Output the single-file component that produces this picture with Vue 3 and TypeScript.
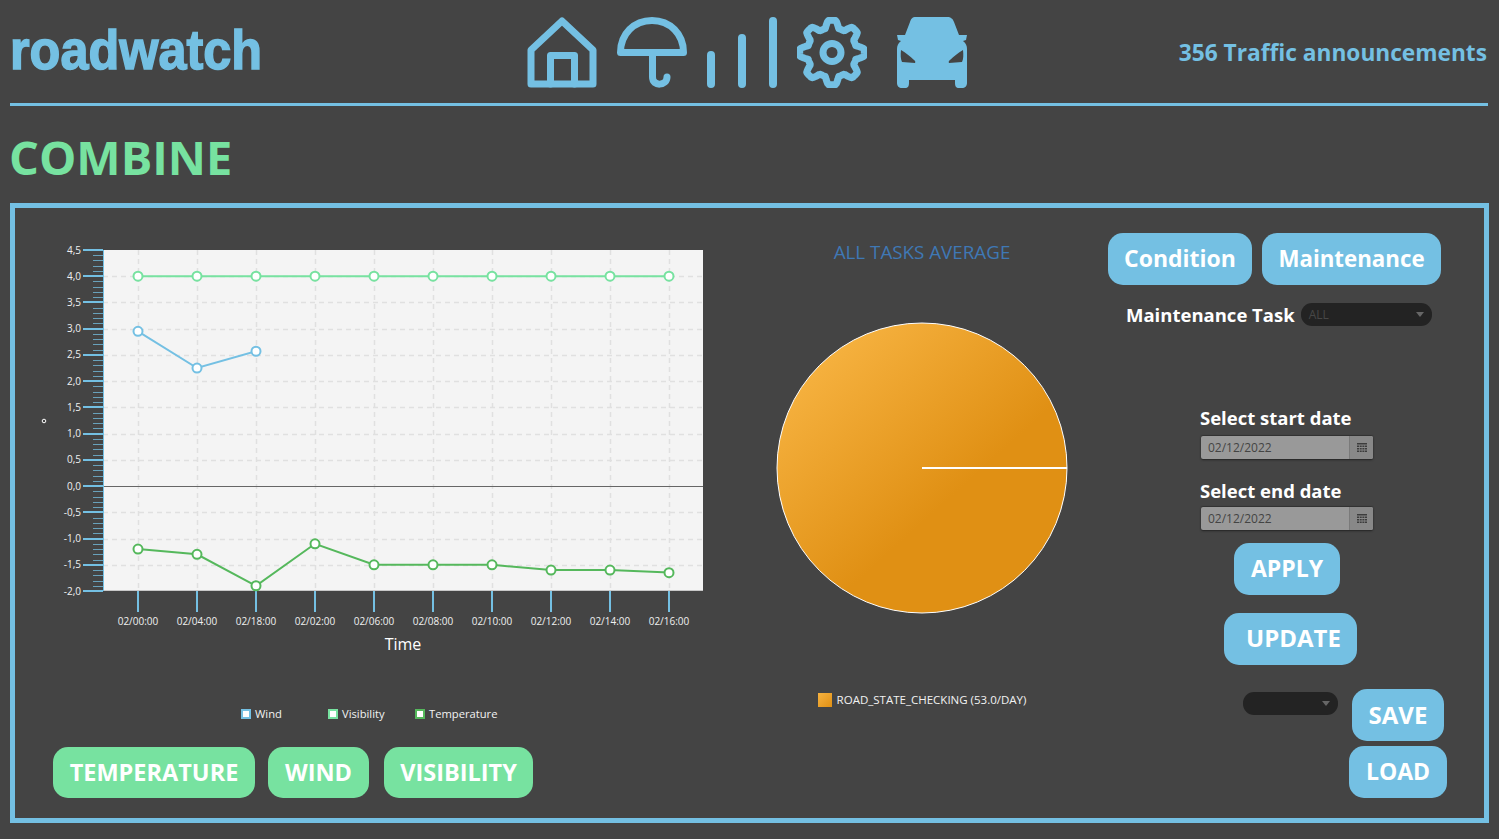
<script setup lang="ts">
const plot = { left: 88, right: 688, top: 42, bottom: 383 }
const unit = (plot.bottom - plot.top) / 6.5
const y = (v: number) => plot.bottom - (v + 2) * unit
const x = (i: number) => 123 + i * 59
// snap hairlines to the pixel grid
const crisp = (v: number) => Math.round(y(v)) + 0.5

const times = ['02/00:00', '02/04:00', '02/18:00', '02/02:00', '02/06:00', '02/08:00', '02/10:00', '02/12:00', '02/14:00', '02/16:00']
const majors = [4.5, 4, 3.5, 3, 2.5, 2, 1.5, 1, 0.5, 0, -0.5, -1, -1.5, -2]
const gridRows = majors.filter((m) => m !== 4.5 && m !== 0 && m !== -2)
const minors: number[] = []
for (let i = 0; i < 13; i++) {
  for (let j = 1; j < 5; j++) minors.push(-2 + i * 0.5 + j * 0.1)
}

const series = [
  { name: 'Visibility', color: '#77e2a0', values: [4, 4, 4, 4, 4, 4, 4, 4, 4, 4] },
  { name: 'Wind', color: '#74c0e3', values: [2.95, 2.25, 2.57] },
  { name: 'Temperature', color: '#55b85c', values: [-1.2, -1.3, -1.9, -1.1, -1.5, -1.5, -1.5, -1.6, -1.6, -1.65] }
]
const legend = [series[1], series[0], series[2]]

const line = (values: number[]) => values.map((v, i) => `${x(i)},${y(v).toFixed(1)}`).join(' ')
const label = (v: number) => v.toFixed(1).replace('.', ',')

// cog outline, 8 teeth, one pointing straight up
const gearPath = (() => {
  const pts: string[] = []
  for (let d = 0; d < 360; d += 2) {
    const a = (d * Math.PI) / 180
    const wave = Math.max(-1, Math.min(1, Math.cos(8 * a) * 1.7))
    const r = 28.5 + 3.8 * wave
    pts.push(`${(35 + r * Math.sin(a)).toFixed(2)} ${(35.5 - r * Math.cos(a)).toFixed(2)}`)
  }
  return 'M' + pts.join('L') + 'Z'
})()
</script>

<template>
  <div class="page">
    <header class="top">
      <div class="logo-box"><div class="logo">roadwatch</div></div>
      <nav class="nav">
        <svg class="icon house" viewBox="0 0 70 71" width="70" height="71">
          <path d="M35 4 L4 33 V67 H66 V33 Z" />
          <path d="M23.500 67 V38.500 H47.500 V67" />
        </svg>
        <svg class="icon umbrella" viewBox="0 0 70 71" width="70" height="71">
          <path d="M3.500 35.500 C3.500 17 17 3.500 35 3.500 C53 3.500 66.500 17 66.500 35.500 Z" />
          <path d="M35.500 36 V60 C35.500 70 50 69 50 60" />
        </svg>
        <svg class="icon bars" viewBox="0 0 70 71" width="70" height="71">
          <path d="M4 38 V67 M35 21 V67 M66 4 V67" />
        </svg>
        <svg class="icon gear" viewBox="0 0 70 71" width="70" height="71">
          <path :d="gearPath" />
          <circle cx="35" cy="35.500" r="9" />
        </svg>
        <svg class="car" viewBox="0 0 70 71" width="70" height="71">
          <path fill-rule="evenodd" d="M19 0 H50 C54 0 56 2 57 5 L62 18 L70 18 L69 23 L66 24 C69 26 70 29 70 32 V66 C70 69 68 71 65 71 H62 C59 71 58 69 58 66 V63 H12 V66 C12 69 11 71 8 71 H5 C2 71 0 69 0 66 V32 C0 29 1 26 4 24 L1 23 L0 18 L8 18 L13 5 C14 2 15 0 19 0 Z M4 33 C3.500 38 3.500 42 5 45 L18 46 C18.500 45 18.500 44 17 43 C13 39 9 36 4 33 Z M66 33 C61 36 57 39 53 43 C51.500 44 51.500 45 52 46 L65 45 C66.500 42 66.500 38 66 33 Z" />
        </svg>
      </nav>
      <div class="announce">356 Traffic announcements</div>
    </header>
    <h1 class="title">COMBINE</h1>

    <section class="panel">
      <div class="col-chart">
        <svg class="chart" viewBox="0 0 730 492" width="730" height="492">
          <rect :x="plot.left" :y="plot.top" :width="plot.right - plot.left" :height="plot.bottom - plot.top" fill="#f4f4f4" />
          <line v-for="m in gridRows" :key="'g' + m" :x1="plot.left" :x2="plot.right" :y1="crisp(m)" :y2="crisp(m)" class="grid" />
          <line v-for="(t, i) in times" :key="'v' + t" :x1="x(i) + 0.5" :x2="x(i) + 0.5" :y1="plot.top" :y2="plot.bottom" class="grid" />
          <line :x1="plot.left" :x2="plot.right" :y1="crisp(0)" :y2="crisp(0)" stroke="#666" />
          <line :x1="plot.left" :x2="plot.right" :y1="plot.bottom - 0.5" :y2="plot.bottom - 0.5" stroke="#c8c8c8" />

          <line v-for="m in minors" :key="'n' + m" :x1="plot.left - 10" :x2="plot.left" :y1="crisp(m)" :y2="crisp(m)" stroke="#74c0e3" stroke-opacity="0.75" />
          <line v-for="m in majors" :key="'j' + m" :x1="plot.left - 20" :x2="plot.left" :y1="Math.round(y(m))" :y2="Math.round(y(m))" stroke="#74c0e3" stroke-width="2" />
          <line :x1="plot.left + 0.5" :x2="plot.left + 0.5" :y1="plot.top" :y2="plot.bottom" stroke="#74c0e3" />
          <text v-for="m in majors" :key="'l' + m" class="tick" text-anchor="end" :x="plot.left - 22" :y="y(m) + 3.500">{{ label(m) }}</text>

          <line v-for="(t, i) in times" :key="'x' + t" :x1="x(i)" :x2="x(i)" :y1="plot.bottom" :y2="plot.bottom + 21" stroke="#74c0e3" stroke-width="2" />
          <text v-for="(t, i) in times" :key="'t' + t" class="tick" text-anchor="middle" :x="x(i)" :y="plot.bottom + 34">{{ t }}</text>

          <text class="axis" text-anchor="middle" x="388" y="442">Time</text>
          <circle cx="29" cy="213" r="1.800" fill="none" stroke="#fff" />

          <g v-for="s in series" :key="s.name">
            <polyline :points="line(s.values)" fill="none" :stroke="s.color" stroke-width="2" />
            <circle v-for="(v, i) in s.values" :key="i" :cx="x(i)" :cy="y(v)" r="4.500" fill="#fff" :stroke="s.color" stroke-width="2" />
          </g>
        </svg>
        <div class="legend">
          <div v-for="s in legend" :key="s.name" class="legend-item">
            <span class="swatch" :style="{ borderColor: s.color }"></span>{{ s.name }}
          </div>
        </div>
        <div class="green-row">
          <button class="btn green w-temp">TEMPERATURE</button>
          <button class="btn green w-wind">WIND</button>
          <button class="btn green w-vis">VISIBILITY</button>
        </div>
      </div>

      <div class="col-pie">
        <div class="pie-title">ALL TASKS AVERAGE</div>
        <svg class="pie" viewBox="0 0 292 292" width="292" height="292">
          <defs>
            <linearGradient id="pieFill" x1="0.15" y1="0.1" x2="0.6" y2="0.6">
              <stop offset="0" stop-color="#f6b240" />
              <stop offset="1" stop-color="#e09014" />
            </linearGradient>
          </defs>
          <circle cx="146" cy="146" r="145" fill="url(#pieFill)" stroke="#fff" />
          <line x1="146" y1="146" x2="291" y2="146" stroke="#fff" stroke-width="2" />
        </svg>
        <div class="pie-legend"><span class="pie-swatch"></span>ROAD_STATE_CHECKING (53.0/DAY)</div>
      </div>

      <div class="col-side">
        <div class="tabs">
          <button class="btn w-condition">Condition</button>
          <button class="btn w-maint">Maintenance</button>
        </div>
        <div class="task-row">
          <span class="side-label">Maintenance Task</span>
          <div class="select task-select">ALL<i class="arrow"></i></div>
        </div>
        <div class="dates">
          <div class="side-label">Select start date</div>
          <div class="date first">
            <span class="date-value">02/12/2022</span>
            <span class="date-btn">
              <svg width="10" height="9" viewBox="0 0 10 9"><path d="M0 0H10V1.500H0Z M0 2.500H2V4H0Z M2.700 2.500H4.700V4H2.700Z M5.400 2.500H7.400V4H5.400Z M8 2.500H10V4H8Z M0 5H2V6.500H0Z M2.700 5H4.700V6.500H2.700Z M5.400 5H7.400V6.500H5.400Z M8 5H10V6.500H8Z M0 7.500H2V9H0Z M2.700 7.500H4.700V9H2.700Z M5.400 7.500H7.400V9H5.400Z M8 7.500H10V9H8Z" fill="#3c3c3c" /></svg>
            </span>
          </div>
          <div class="side-label second">Select end date</div>
          <div class="date">
            <span class="date-value">02/12/2022</span>
            <span class="date-btn">
              <svg width="10" height="9" viewBox="0 0 10 9"><path d="M0 0H10V1.500H0Z M0 2.500H2V4H0Z M2.700 2.500H4.700V4H2.700Z M5.400 2.500H7.400V4H5.400Z M8 2.500H10V4H8Z M0 5H2V6.500H0Z M2.700 5H4.700V6.500H2.700Z M5.400 5H7.400V6.500H5.400Z M8 5H10V6.500H8Z M0 7.500H2V9H0Z M2.700 7.500H4.700V9H2.700Z M5.400 7.500H7.400V9H5.400Z M8 7.500H10V9H8Z" fill="#3c3c3c" /></svg>
            </span>
          </div>
        </div>
        <button class="btn w-apply">APPLY</button>
        <button class="btn w-update">UPDATE</button>
        <div class="save-row">
          <div class="select save-select"><i class="arrow"></i></div>
          <button class="btn w-save">SAVE</button>
        </div>
        <button class="btn w-load">LOAD</button>
      </div>
    </section>
  </div>
</template>

<style>
html, body {
  background: #444444;
  overflow: hidden;
}
</style>

<style scoped>
.page {
  width: 1499px;
  height: 839px;
  box-sizing: border-box;
  padding: 0 10px;
  background: #444444;
  font-family: "Open Sans", "Noto Sans", sans-serif;
  color: #fff;
}

.top {
  display: flex;
  align-items: center;
  height: 106px;
  box-sizing: border-box;
  border-bottom: 3px solid #74c0e3;
  margin-right: 1px;
}

.logo-box {
  width: 517px;
  height: 103px;
  flex-shrink: 0;
}

.logo {
  line-height: 100px;
  font-family: "Liberation Sans", sans-serif;
  font-weight: 700;
  font-size: 56px;
  color: #74c0e3;
  -webkit-text-stroke: 1.500px #74c0e3;
  transform: scaleX(0.9);
  transform-origin: left center;
}

.nav {
  display: flex;
  gap: 20px;
  width: 450px;
  padding-top: 2px;
  flex-shrink: 0;
}

.icon {
  fill: none;
  stroke: #74c0e3;
  stroke-width: 7;
  stroke-linejoin: round;
  stroke-linecap: round;
}

.bars {
  stroke-width: 8;
}

.car {
  fill: #74c0e3;
  margin-left: 10px;
}

.announce {
  flex: 1;
  margin-right: 1px;
  padding-top: 2px;
  text-align: right;
  font-size: 22.700px;
  font-weight: 700;
  white-space: nowrap;
  color: #74c0e3;
}

.title {
  margin: 0 0 0 -1px;
  height: 97px;
  line-height: 102px;
  font-size: 47px;
  font-weight: 700;
  color: #77e2a0;
}

.panel {
  display: flex;
  width: 1479px;
  height: 620px;
  box-sizing: border-box;
  border: 5px solid #74c0e3;
}

.col-chart {
  width: 730px;
  flex-shrink: 0;
}

.chart {
  display: block;
}

.grid {
  stroke: #e0e0e0;
  stroke-width: 1.500;
  stroke-dasharray: 5 4;
}

.tick {
  font-size: 10px;
  fill: #f0f0f0;
}

.axis {
  font-size: 16px;
  fill: #fff;
}

.legend {
  display: flex;
  margin: 8px 0 0 226px;
  height: 12px;
  font-size: 11.200px;
  line-height: 12px;
  color: #f2f2f2;
}

.legend-item {
  display: flex;
  align-items: center;
  width: 87px;
}

.swatch {
  width: 6px;
  height: 6px;
  margin-right: 4px;
  background: #fff;
  border: 2px solid;
}

.green-row {
  display: flex;
  margin: 27px 0 0 38px;
}

.col-pie {
  width: 354px;
  flex-shrink: 0;
  display: flex;
  flex-direction: column;
  align-items: center;
}

.pie-title {
  margin-top: 32px;
  height: 24px;
  line-height: 24px;
  font-size: 18.800px;
  color: #3f78b5;
}

.pie {
  display: block;
  margin-top: 58px;
}

.pie-legend {
  display: flex;
  align-items: center;
  margin-top: 78px;
  font-size: 11.500px;
  color: #f2f2f2;
}

.pie-swatch {
  width: 14px;
  height: 14px;
  margin-right: 5px;
  background: linear-gradient(135deg, #f6b240, #e09014);
}

.col-side {
  flex: 1;
}

.btn {
  display: block;
  height: 52px;
  padding: 0 0 2px;
  border: none;
  border-radius: 15px;
  background: #74c0e3;
  color: #fff;
  font-family: inherit;
  font-weight: 700;
  font-size: 23px;
}

.green {
  height: 51px;
  background: #77e2a0;
  font-size: 23.500px;
}

.w-temp { width: 202px; margin-right: 13px; }
.w-wind { width: 101px; margin-right: 15px; }
.w-vis { width: 149px; }
.w-condition { width: 144px; }
.w-maint { width: 179px; font-size: 22.300px; }
.w-apply { width: 106px; margin: 13px 0 0 135px; }
.w-update { width: 133px; margin: 18px 0 0 125px; padding: 0 0 4px 6px; font-size: 24px; }
.w-save { width: 92px; font-size: 24px; }
.w-load { width: 98px; margin: 5px 0 0 250px; }

.tabs {
  display: flex;
  gap: 10px;
  margin: 25px 0 0 9px;
}

.task-row {
  display: flex;
  align-items: center;
  gap: 6px;
  margin: 18px 0 0 27px;
  height: 23px;
}

.side-label {
  height: 22px;
  line-height: 21px;
  font-size: 18.500px;
  font-weight: 700;
  white-space: nowrap;
}

.select {
  position: relative;
  box-sizing: border-box;
  height: 23px;
  line-height: 23px;
  padding-left: 8px;
  border-radius: 11px;
  background: #232323;
  color: #474747;
  font-size: 12px;
}

.arrow {
  position: absolute;
  right: 8px;
  top: 9px;
  border-left: 4px solid transparent;
  border-right: 4px solid transparent;
  border-top: 5px solid #666;
}

.task-select {
  width: 131px;
}

.save-select {
  width: 95px;
  margin: 3px 14px 0 144px;
}

.dates {
  margin: 81px 0 0 101px;
}

.second {
  margin-top: 21px;
}

.date {
  display: flex;
  width: 172px;
  height: 23px;
  margin: 5px 0 0 1px;
  border-radius: 2px;
  background: #999;
  box-shadow: 0 1px 2px #222, 0 -1px 1px #333;
}

.date.first {
  margin-top: 7px;
}

.date-value {
  flex: 1;
  padding-left: 7px;
  line-height: 23px;
  font-size: 12px;
  color: #444;
}

.date-btn {
  display: flex;
  align-items: center;
  justify-content: center;
  width: 24px;
  background: #888;
  border-left: 1px solid #7a7a7a;
  border-radius: 0 2px 2px 0;
  box-sizing: border-box;
}

.save-row {
  display: flex;
  align-items: flex-start;
  margin-top: 24px;
}
</style>
